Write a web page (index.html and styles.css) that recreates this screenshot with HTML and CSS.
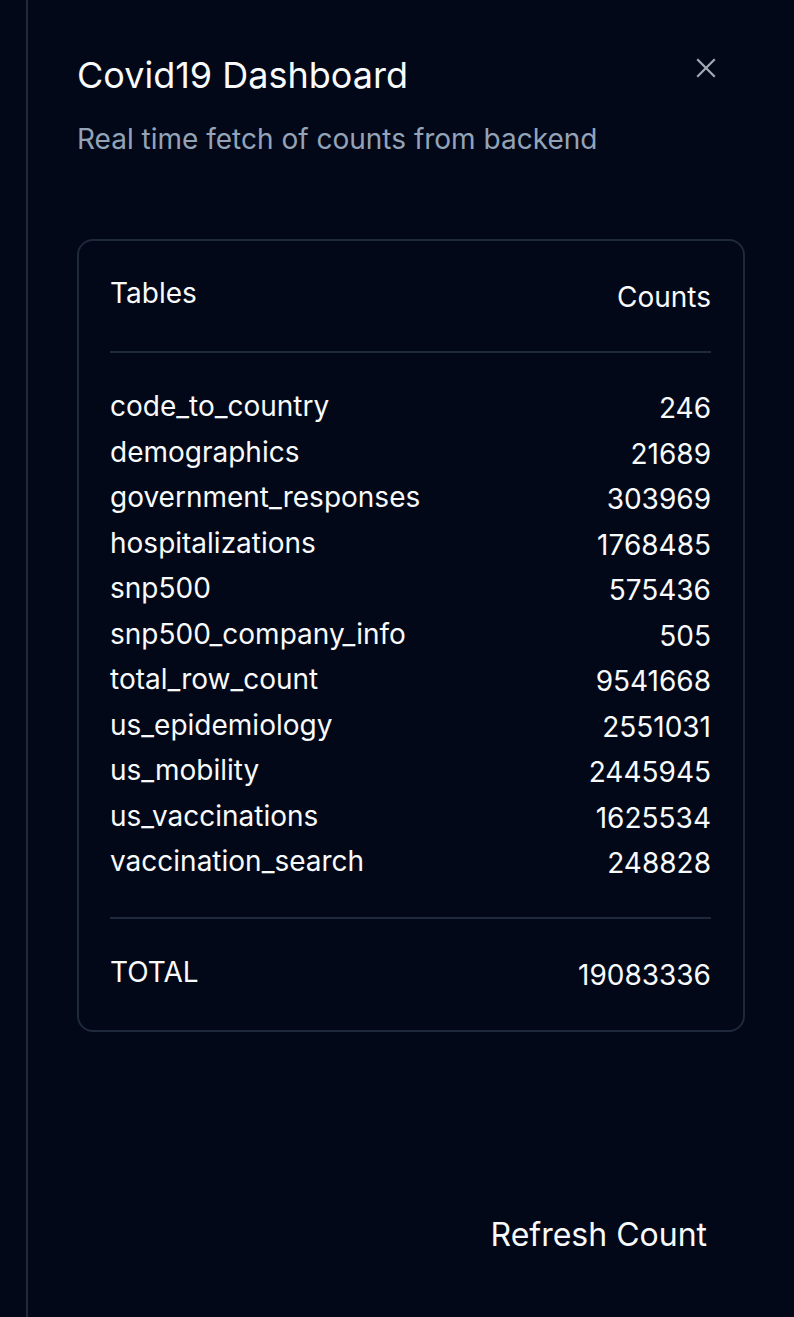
FILE: index.html
```html
<!DOCTYPE html>
<html lang="en">
<head>
<meta charset="utf-8">
<title>Covid19 Dashboard</title>
<link rel="stylesheet" href="styles.css">
</head>
<body>
<div class="page">
  <aside class="sheet">
    <header class="sheet-header">
      <div class="titles">
        <h2 class="title">Covid19 Dashboard</h2>
        <p class="desc">Real time fetch of counts from backend</p>
      </div>
      <button class="close" aria-label="Close">
        <svg width="24" height="24" viewBox="0 0 24 24" fill="none" stroke="currentColor" stroke-width="2.2" stroke-linecap="square"><path d="M4 4 L20 20 M20 4 L4 20"/></svg>
      </button>
    </header>
    <section class="card">
      <div class="row head"><span>Tables</span><span class="num">Counts</span></div>
      <div class="divider top"></div>
      <div class="rows">
        <div class="row"><span>code_to_country</span><span class="num">246</span></div>
        <div class="row"><span>demographics</span><span class="num">21689</span></div>
        <div class="row"><span>government_responses</span><span class="num">303969</span></div>
        <div class="row"><span>hospitalizations</span><span class="num">1768485</span></div>
        <div class="row"><span>snp500</span><span class="num">575436</span></div>
        <div class="row"><span>snp500_company_info</span><span class="num">505</span></div>
        <div class="row"><span>total_row_count</span><span class="num">9541668</span></div>
        <div class="row"><span>us_epidemiology</span><span class="num">2551031</span></div>
        <div class="row"><span>us_mobility</span><span class="num">2445945</span></div>
        <div class="row"><span>us_vaccinations</span><span class="num">1625534</span></div>
        <div class="row"><span>vaccination_search</span><span class="num">248828</span></div>
      </div>
      <div class="divider bottom"></div>
      <div class="row total"><span>TOTAL</span><span class="num">19083336</span></div>
    </section>
    <footer class="sheet-footer">
      <button class="refresh">Refresh Count</button>
    </footer>
  </aside>
</div>
</body>
</html>
```
FILE: styles.css
```css
* { box-sizing: border-box; }
html, body {
  margin: 0;
  padding: 0;
  background: #020817;
  height: 100%;
}
body {
  font-family: Inter, "Noto Sans", sans-serif;
  color: #f8fafc;
}
.page {
  height: 1317px;
  display: flex;
  padding-left: 26px;
}
.sheet {
  flex: 1;
  border-left: 2px solid #1e293b;
  padding: 52px 49px 0 49px;
  display: flex;
  flex-direction: column;
}
.sheet-header {
  display: flex;
  justify-content: space-between;
  align-items: flex-start;
  padding-right: 27px;
}
.title {
  margin: 0;
  font-size: 36px;
  font-weight: 400;
  line-height: 46px;
  color: #f8fafc;
}
.desc {
  margin: 23px 0 0 0;
  font-size: 28px;
  line-height: 36px;
  color: #94a3b8;
}
.close {
  background: none;
  border: none;
  padding: 0;
  margin-top: 4px;
  color: #a3aab5;
  width: 24px;
  height: 24px;
  display: flex;
}
.card {
  margin-top: 82px;
  border: 2px solid #1e293b;
  border-radius: 16px;
  padding: 29px 32px 35px 31px;
}
.row {
  display: flex;
  justify-content: space-between;
  align-items: flex-start;
  font-size: 28px;
  height: 45.5px;
  line-height: 45.5px;
}
.row .num { margin-top: 2px; }
.head { height: 46px; line-height: 46px; }
.head .num { margin-top: 4px; }
.total .num { margin-top: 3px; }
.divider {
  height: 2px;
  background: #1e293b;
}
.divider.top { margin: 35px 0 31px 0; }
.divider.bottom { margin: 32px 0 31px 0; }
.sheet-footer {
  display: flex;
  justify-content: flex-end;
  margin-top: 181px;
  padding-right: 38px;
}
.refresh {
  background: none;
  border: none;
  padding: 0;
  font-family: Inter, "Noto Sans", sans-serif;
  font-size: 32px;
  line-height: 44px;
  color: #f8fafc;
}
```
